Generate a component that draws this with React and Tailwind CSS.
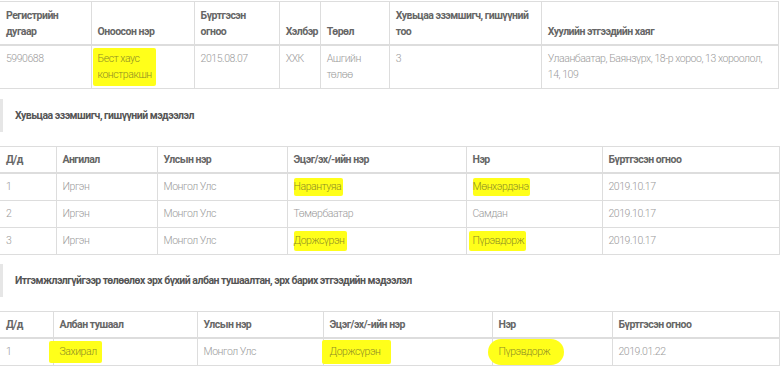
const font = "font-['Roboto','Liberation_Sans',sans-serif]";

const th = 'border border-[#ddd] border-b-2 px-[6px] pt-[5px] pb-[4px] text-left align-bottom font-bold text-[#666] tracking-[-0.5px]';
const td = 'border border-[#ddd] px-[6px] py-[5px] align-top font-light text-[#9a9a9a] tracking-[-0.45px]';

function Mark({ children, className = '' }) {
  return (
    <span className={`inline-block bg-[#ffff1a] text-[#8d8d25] rounded-[2px] ${className}`}>
      {children}
    </span>
  );
}

function Section({ title }) {
  return (
    <div className="flex items-center h-[33px] border-l-[3px] border-[#e6e6e6] pl-[12px]">
      <span className="text-[10.5px] font-bold text-[#555] tracking-[-0.5px]">{title}</span>
    </div>
  );
}

function Table({ widths, head, rows }) {
  return (
    <table className="table-fixed border-collapse w-[779px] text-[10.5px] leading-[16px]">
      <colgroup>
        {widths.map((w, i) => (
          <col key={i} style={{ width: w }} />
        ))}
      </colgroup>
      <thead>
        <tr>
          {head.map((h, i) => (
            <th key={i} className={`${th} ${i === 0 ? 'border-l-0' : ''}`}>{h}</th>
          ))}
        </tr>
      </thead>
      <tbody>
        {rows.map((r, ri) => (
          <tr key={ri}>
            {r.map((c, i) => (
              <td key={i} className={`${td} ${i === 0 ? 'border-l-0' : ''}`}>{c}</td>
            ))}
          </tr>
        ))}
      </tbody>
    </table>
  );
}

export default function App() {
  return (
    <div className={`w-[780px] h-[367px] overflow-hidden bg-white pt-[1px] ${font}`}>
      <table className="table-fixed border-collapse w-[779px] text-[10.5px] leading-[16px]">
        <colgroup>
          <col className="w-[91px]" />
          <col className="w-[103px]" />
          <col className="w-[85px]" />
          <col className="w-[41px]" />
          <col className="w-[69px]" />
          <col className="w-[152px]" />
          <col className="w-[237px]" />
        </colgroup>
        <thead>
          <tr>
            <th className={`${th} border-l-0 pt-[6px]`}>Регистрийн<br />дугаар</th>
            <th className={th}>Оноосон нэр</th>
            <th className={th}>Бүртгэсэн<br />огноо</th>
            <th className={th}>Хэлбэр</th>
            <th className={th}>Төрөл</th>
            <th className={th}>Хувьцаа эзэмшигч, гишүүний тоо</th>
            <th className={th}>Хуулийн этгээдийн хаяг</th>
          </tr>
        </thead>
        <tbody>
          <tr>
            <td className={`${td} border-l-0 h-[43px]`}>5990688</td>
            <td className={td}>
              <Mark className="-ml-[5px] pl-[5px] pr-[4px] -my-[3px] py-[3px]">Бест хаус<br />констракшн</Mark>
            </td>
            <td className={td}>2015.08.07</td>
            <td className={td}>ХХК</td>
            <td className={td}>Ашгийн<br />төлөө</td>
            <td className={td}>3</td>
            <td className={td}>Улаанбаатар, Баянзүрх, 18-р хороо, 13 хороолол,<br />14, 109</td>
          </tr>
        </tbody>
      </table>

      <div className="mt-[10px]">
        <Section title="Хувьцаа эзэмшигч, гишүүний мэдээлэл" />
      </div>

      <div className="mt-[14px]">
        <Table
          widths={[56, 101, 130, 179, 136, 177]}
          head={['Д/д', 'Ангилал', 'Улсын нэр', 'Эцэг/эх/-ийн нэр', 'Нэр', 'Бүртгэсэн огноо']}
          rows={[
            ['1', 'Иргэн', 'Монгол Улс', <Mark className="-my-[1px] py-[1px] pr-[2px]">Нарантуяа</Mark>, <Mark className="-my-[1px] py-[1px] pr-[1px]">Мөнхэрдэнэ</Mark>, '2019.10.17'],
            ['2', 'Иргэн', 'Монгол Улс', 'Төмөрбаатар', 'Самдан', '2019.10.17'],
            ['3', 'Иргэн', 'Монгол Улс', <Mark className="-my-[2px] py-[2px] pr-[2px]">Доржсүрэн</Mark>, <Mark className="-ml-[4px] pl-[4px] pr-[2px] -my-[2px] py-[2px]">Пүрэвдорж</Mark>, '2019.10.17'],
          ]}
        />
      </div>

      <div className="mt-[9px]">
        <Section title="Итгэмжлэлгүйгээр төлөөлөх эрх бүхий албан тушаалтан, эрх барих этгээдийн мэдээлэл" />
      </div>

      <div className="mt-[14px]">
        <Table
          widths={[53, 144, 126, 169, 120, 167]}
          head={['Д/д', 'Албан тушаал', 'Улсын нэр', 'Эцэг/эх/-ийн нэр', 'Нэр', 'Бүртгэсэн огноо']}
          rows={[
            [
              '1',
              <Mark className="-ml-[11px] pl-[11px] pr-[5px] -my-[3px] py-[3px]">Захирал</Mark>,
              'Монгол Улс',
              <Mark className="-ml-[8px] pl-[8px] pr-[10px] -my-[4px] py-[4px]">Доржсүрэн</Mark>,
              <Mark className="-ml-[11px] pl-[11px] pr-[14px] -my-[5px] py-[5px] rounded-full">Пүрэвдорж</Mark>,
              '2019.01.22',
            ],
          ]}
        />
      </div>
    </div>
  );
}
